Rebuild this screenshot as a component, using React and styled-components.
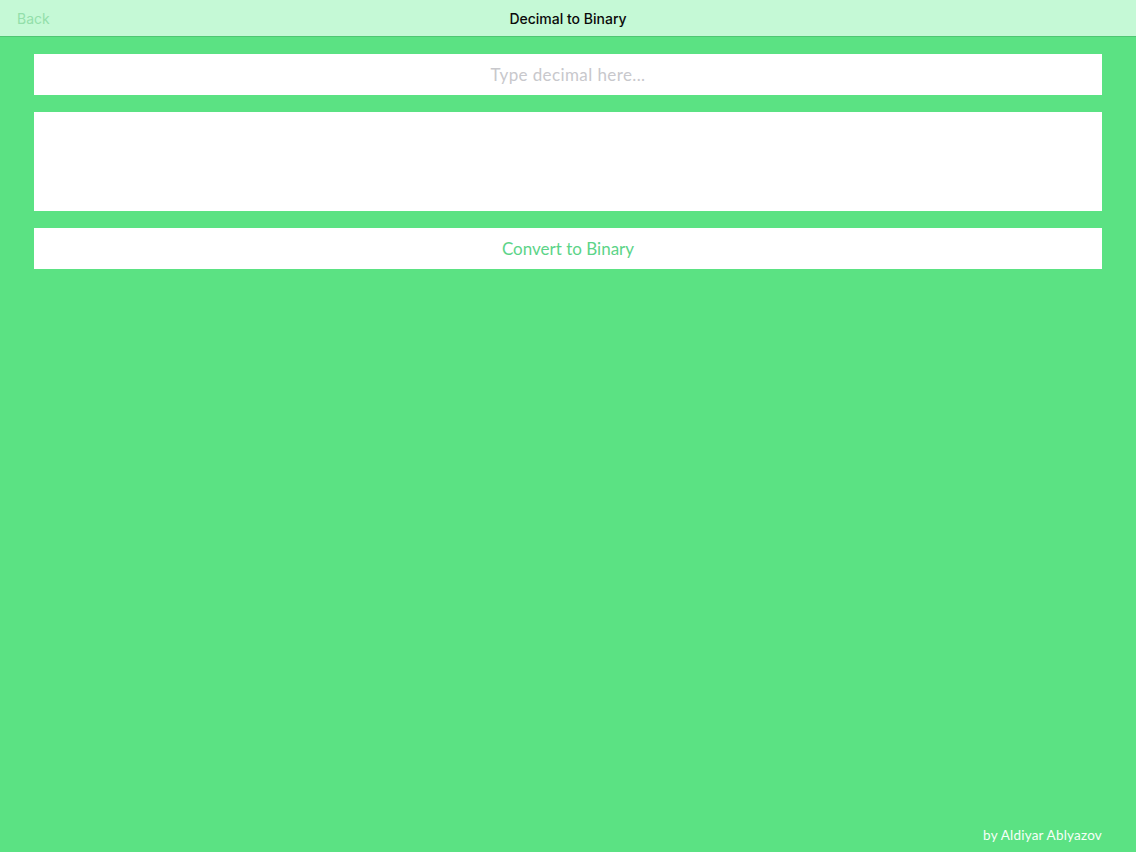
import React, { useState } from "react";
import styled, { createGlobalStyle } from "styled-components";

const GlobalStyle = createGlobalStyle`
  html, body {
    margin: 0;
    padding: 0;
    height: 100%;
  }
  body {
    background: #5be283;
    font-family: "Lato", "Noto Sans", "Liberation Sans", sans-serif;
  }
  #root {
    height: 100%;
  }
`;

const Screen = styled.div`
  display: flex;
  flex-direction: column;
  height: 852px;
  background: #5be283;
`;

const NavBar = styled.div`
  position: relative;
  display: flex;
  align-items: center;
  justify-content: center;
  height: 36px;
  background: #c5f9d6;
  border-bottom: 1px solid #4fc673;
  box-sizing: content-box;
`;

const BackButton = styled.button`
  position: absolute;
  left: 17px;
  top: 10px;
  padding: 0;
  border: none;
  background: none;
  font-family: "Inter", "Liberation Sans", sans-serif;
  font-size: 14px;
  color: #93dfaa;
  cursor: pointer;
`;

const Title = styled.div`
  font-family: "Inter", "Liberation Sans", sans-serif;
  font-size: 14px;
  font-weight: 500;
  color: #0a0a0a;
  margin-top: 1px;
`;

const Content = styled.div`
  display: flex;
  flex-direction: column;
  gap: 17px;
  padding: 17px 34px 0;
  flex: 1;
`;

const DecimalInput = styled.input`
  height: 41px;
  border: none;
  outline: none;
  padding: 0 12px;
  background: #ffffff;
  text-align: center;
  font-family: "Lato", "Noto Sans", sans-serif;
  font-size: 17px;
  letter-spacing: 0.4px;
  color: #333;
  box-sizing: border-box;

  &::placeholder {
    color: #c8c8cc;
  }
`;

const Output = styled.div`
  height: 99px;
  background: #ffffff;
  font-family: "Lato", "Noto Sans", sans-serif;
  font-size: 17px;
  padding: 8px;
  box-sizing: border-box;
  word-break: break-all;
`;

const ConvertButton = styled.button`
  height: 41px;
  border: none;
  background: #ffffff;
  font-family: "Lato", "Noto Sans", sans-serif;
  font-size: 17px;
  color: #5cd488;
  cursor: pointer;
  padding: 0;
`;

const Footer = styled.div`
  display: flex;
  justify-content: flex-end;
  padding: 0 34px 9px;
  font-family: "Lato", "Noto Sans", sans-serif;
  font-size: 13.5px;
  font-weight: 400;
  letter-spacing: 0.2px;
  color: #f6fff8;
`;

function App() {
  const [value, setValue] = useState("");
  const [result, setResult] = useState("");

  const handleConvert = () => {
    const n = parseInt(value, 10);
    setResult(isNaN(n) ? "" : n.toString(2));
  };

  return (
    <Screen>
      <GlobalStyle />
      <NavBar>
        <BackButton>Back</BackButton>
        <Title>Decimal to Binary</Title>
      </NavBar>
      <Content>
        <DecimalInput
          placeholder="Type decimal here..."
          value={value}
          onChange={(e) => setValue(e.target.value)}
        />
        <Output>{result}</Output>
        <ConvertButton onClick={handleConvert}>Convert to Binary</ConvertButton>
      </Content>
      <Footer>by Aldiyar Ablyazov</Footer>
    </Screen>
  );
}

export default App;
